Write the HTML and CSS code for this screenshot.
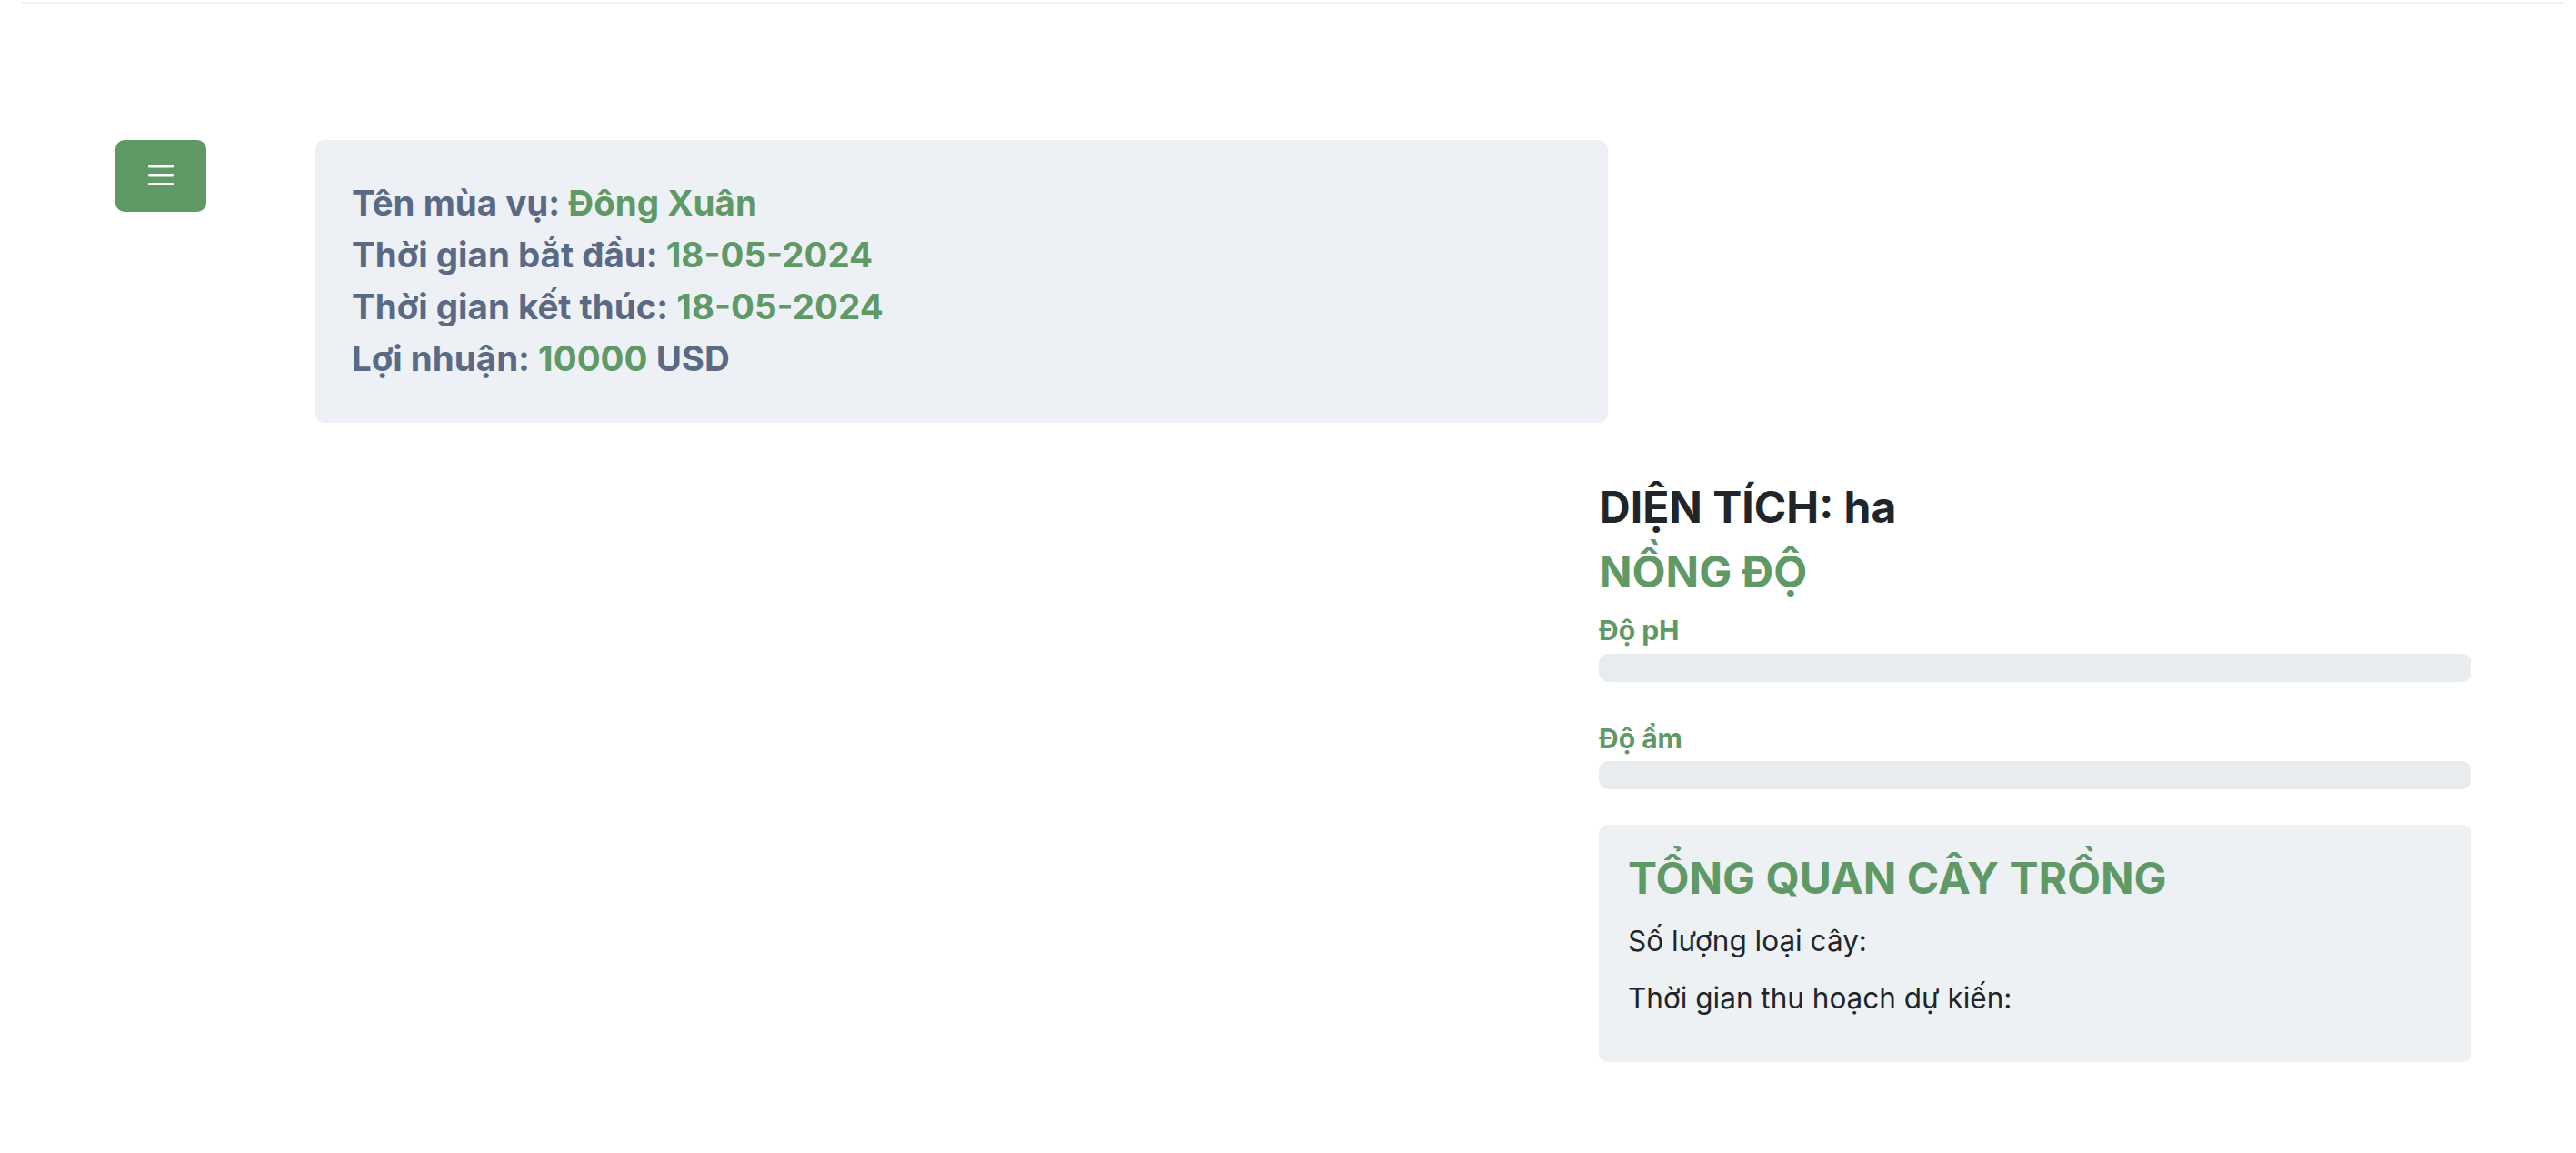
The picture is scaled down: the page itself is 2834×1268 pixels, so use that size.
FILE: index.html
```html
<!DOCTYPE html>
<html lang="vi">
<head>
<meta charset="utf-8">
<title>Mùa vụ</title>
<link rel="stylesheet" href="styles.css">
</head>
<body>
<div class="topline"></div>
<div class="top-row">
  <button class="menu-btn" type="button" aria-label="Menu">
    <svg width="28" height="24" viewBox="0 0 28 24"><rect x="0" y="2" width="28" height="3.5" rx="1.2" fill="#fff"/><rect x="0" y="12" width="28" height="3.5" rx="1.2" fill="#fff"/><rect x="0" y="22" width="28" height="3.5" rx="1.2" fill="#fff"/></svg>
  </button>
  <div class="info-card">
    <div class="info-line">Tên mùa vụ: <span class="green">Đông Xuân</span></div>
    <div class="info-line">Thời gian bắt đầu: <span class="green">18-05-2024</span></div>
    <div class="info-line">Thời gian kết thúc: <span class="green">18-05-2024</span></div>
    <div class="info-line">Lợi nhuận: <span class="green">10000</span> USD</div>
  </div>
</div>
<div class="side">
  <h2 class="area">DIỆN TÍCH: ha</h2>
  <h2 class="conc">NỒNG ĐỘ</h2>
  <div class="metric">
    <div class="metric-label">Độ pH</div>
    <div class="bar"></div>
  </div>
  <div class="metric">
    <div class="metric-label">Độ ẩm</div>
    <div class="bar"></div>
  </div>
  <div class="overview">
    <h2 class="overview-title">TỔNG QUAN CÂY TRỒNG</h2>
    <p class="overview-text">Số lượng loại cây:</p>
    <p class="overview-text">Thời gian thu hoạch dự kiến:</p>
  </div>
</div>
</body>
</html>
```
FILE: styles.css
```css
* { box-sizing: border-box; }
html, body { margin: 0; padding: 0; background: #fff; }
body {
  font-family: Inter, "Noto Sans", "Liberation Sans", sans-serif;
  color: #212529;
  width: 2834px;
  min-height: 1268px;
}
.topline {
  height: 2px;
  margin: 2px 12px 0 24px;
  background: #edf1f5;
}
.top-row {
  display: flex;
  align-items: flex-start;
  padding: 150px 0 0 127px;
}
.menu-btn {
  width: 100px;
  height: 79px;
  border: 0;
  border-radius: 10px;
  background: #5f9966;
  display: flex;
  align-items: center;
  justify-content: center;
  padding: 0 0 6px 0;
  margin-right: 120px;
  cursor: pointer;
}
.menu-btn svg { display: block; }
.info-card {
  width: 1422px;
  height: 311px;
  background: #edf1f5;
  border-radius: 10px;
  padding: 41px 40px;
}
.info-line {
  font-size: 38.5px;
  line-height: 57px;
  font-weight: 650;
  color: #5a6a85;
}
.green { color: #5f9966; }
.side {
  width: 960px;
  margin: 64px 0 0 1759px;
}
.area {
  margin: 0;
  font-size: 48px;
  line-height: 1.2;
  font-weight: 700;
  color: #212529;
}
.conc {
  margin: 13px 0 0;
  font-size: 48px;
  line-height: 1.2;
  font-weight: 700;
  color: #5f9966;
}
.metric { margin-top: 15px; }
.metric + .metric { margin-top: 41px; }
.metric-label {
  font-size: 30px;
  line-height: 43.5px;
  font-weight: 700;
  color: #5f9966;
}
.bar {
  margin-top: 3px;
  height: 31px;
  border-radius: 11px;
  background: #e9ecef;
}
.overview {
  margin-top: 39px;
  height: 261px;
  background: #edf1f4;
  border-radius: 10px;
  padding: 30px 32px 28px;
}
.overview-title {
  margin: 0 0 18px;
  font-size: 48px;
  line-height: 1.2;
  font-weight: 700;
  color: #5f9966;
}
.overview-text {
  margin: 0 0 20px;
  font-size: 31.5px;
  line-height: 43.5px;
  font-weight: 400;
  color: #212529;
}
```
